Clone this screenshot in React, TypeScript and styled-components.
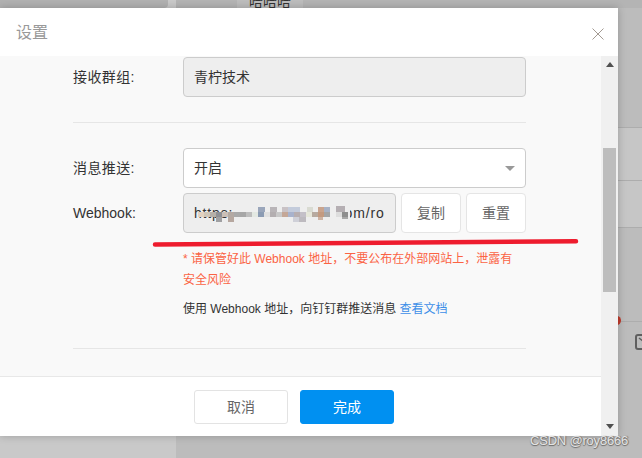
import React from "react";
import styled, { createGlobalStyle } from "styled-components";

const Global = createGlobalStyle`
  html, body { margin: 0; padding: 0; background: #bcbcbc; overflow: hidden; }
  * { box-sizing: border-box; }
  #root { font-family: "Liberation Sans", "Noto Sans CJK SC", sans-serif; }
`;

const Page = styled.div`
  position: relative;
  width: 642px;
  height: 458px;
  overflow: hidden;
  display: flex;
`;

const Sidebar = styled.div`
  width: 176px;
  background: #c9c9c9;
`;

const SidebarTop = styled.div`
  width: 168px;
  height: 8px;
  background: #b1b1b1;
  border-bottom-right-radius: 4px;
`;

const Main = styled.div`
  flex: 1;
  position: relative;
  display: flex;
  flex-direction: column;
`;

const TopBar = styled.div`
  height: 8px;
  background: #b4b4b4;
  padding-left: 61px;
`;

const TopTab = styled.div`
  width: 66px;
  height: 8px;
  overflow: hidden;
  background: #bdbdbd;
  display: flex;
  justify-content: center;
  align-items: flex-end;
  font-size: 14px;
  line-height: 14px;
  color: #333;
`;

const TopTabText = styled.span`
  display: block;
  margin-bottom: -1px;
`;

const Row = styled.div<{ $h: number; $light?: boolean }>`
  height: ${(p) => p.$h}px;
  border-bottom: 1px solid #adadad;
  background: ${(p) => (p.$light ? "#c6c6c6" : "#bcbcbc")};
`;

const Dot = styled.div`
  position: absolute;
  left: 437px;
  top: 316px;
  width: 8px;
  height: 9px;
  border-radius: 50%;
  background: #c0392b;
`;

const BoxIcon = styled.svg`
  position: absolute;
  left: 459px;
  top: 334px;
`;

const Dialog = styled.div`
  position: absolute;
  left: 0;
  top: 8px;
  width: 618px;
  height: 428px;
  background: #fff;
  box-shadow: 0 0 8px rgba(0, 0, 0, 0.22);
  display: flex;
  flex-direction: column;
`;

const Header = styled.div`
  height: 48px;
  flex: none;
  display: flex;
  align-items: center;
  justify-content: space-between;
  padding: 0 14px 0 16px;
`;

const Title = styled.div`
  font-size: 16px;
  color: #999;
  margin-top: -2px;
`;

const CloseIcon = styled.svg`
  margin-top: 3px;
`;

const Columns = styled.div`
  flex: 1;
  display: flex;
  min-height: 0;
`;

const Left = styled.div`
  flex: 1;
  min-width: 0;
  display: flex;
  flex-direction: column;
`;

const Body = styled.div`
  height: 320px;
  background: #f9f9f9;
  padding: 1px 75px 0 73px;
  overflow: hidden;
`;

const FormRow = styled.div<{ $gap?: number }>`
  display: flex;
  align-items: center;
  margin-top: ${(p) => p.$gap ?? 0}px;
`;

const Label = styled.div<{ $cjk?: boolean }>`
  width: 110px;
  flex: none;
  font-size: 14px;
  color: #333;
  letter-spacing: ${(p) => (p.$cjk ? "0.4px" : "0")};
  padding-bottom: ${(p) => (p.$cjk ? "2px" : "0")};
`;

const Control = styled.div`
  flex: 1;
  min-width: 0;
  height: 40px;
  border: 1px solid #ccc;
  border-radius: 4px;
  padding: 0 10px;
  font-size: 14px;
  display: flex;
  align-items: center;
  color: #333;
`;

const Disabled = styled(Control)<{ $cjk?: boolean }>`
  background: #eee;
  position: relative;
  padding-bottom: ${(p) => (p.$cjk ? "3px" : "0")};
`;

const Select = styled(Control)`
  background: #fff;
  justify-content: space-between;
  padding-bottom: 2px;
`;

const Caret = styled.span`
  width: 0;
  height: 0;
  margin-top: 2px;
  border-left: 5px solid transparent;
  border-right: 5px solid transparent;
  border-top: 5px solid #999;
`;

const Divider = styled.div<{ $top: number; $bottom: number }>`
  height: 1px;
  background: #e6e6e6;
  margin: ${(p) => p.$top}px 0 ${(p) => p.$bottom}px;
`;

const UrlText = styled.span`
  white-space: nowrap;
  letter-spacing: 0.83px;
`;

const Mosaic = styled.svg`
  position: absolute;
  left: 1px;
  top: 1px;
`;

const Btn = styled.button`
  flex: none;
  width: 60px;
  height: 40px;
  margin-left: 5px;
  background: #fff;
  border: 1px solid #e5e5e5;
  border-radius: 4px;
  font: inherit;
  font-size: 14px;
  color: #666;
  padding: 0 0 2px;
`;

const Hint = styled.div<{ $gap: number; $warn?: boolean }>`
  margin: ${(p) => p.$gap}px 0 0 110px;
  font-size: 12px;
  line-height: 21px;
  color: ${(p) => (p.$warn ? "#fb6344" : "#333")};
  max-width: 335px;
`;

const DocLink = styled.a`
  color: #3d8fe8;
`;

const Footer = styled.div`
  flex: 1;
  background: #fff;
  border-top: 1px solid #e8e8e8;
  display: flex;
  align-items: center;
  gap: 12px;
  padding-left: 194px;
`;

const FootBtn = styled.button<{ $primary?: boolean }>`
  width: 94px;
  height: 34px;
  border-radius: 3px;
  border: 1px solid ${(p) => (p.$primary ? "#0090f1" : "#e3e3e3")};
  background: ${(p) => (p.$primary ? "#0090f1" : "#fff")};
  color: ${(p) => (p.$primary ? "#fff" : "#666")};
  font: inherit;
  font-size: 14px;
  padding: 0 0 2px;
`;

const Scrollbar = styled.div`
  width: 17px;
  flex: none;
  background: #f0f0f0;
  display: flex;
  flex-direction: column;
  align-items: center;
`;

const ArrowUp = styled.span`
  margin-top: 6px;
  width: 0;
  height: 0;
  border-left: 4px solid transparent;
  border-right: 4px solid transparent;
  border-bottom: 5px solid #505050;
`;

const ArrowDown = styled.span`
  margin-top: auto;
  margin-bottom: 7px;
  width: 0;
  height: 0;
  border-left: 4px solid transparent;
  border-right: 4px solid transparent;
  border-top: 5px solid #505050;
`;

const Thumb = styled.div`
  width: 13px;
  height: 144px;
  margin-top: 81px;
  background: #bdbdbd;
`;

const Stroke = styled.svg`
  position: absolute;
  left: 0;
  top: 0;
  pointer-events: none;
`;

const Watermark = styled.div`
  position: absolute;
  left: 530px;
  top: 433px;
  font-size: 13px;
  line-height: 16px;
  letter-spacing: -0.2px;
  color: #e4e4e4;
  text-shadow: 1px 0 1px #6a6a6a, 0 1px 1px #6a6a6a;
  white-space: nowrap;
`;

const cells: [number, number, number, number, string][] = (
  [
    [38, "#e3d2c0"], [56, "#cfc6b8"], [74, "#b5afa8"], [92, "#8e9095"], [110, "#cbbfb6"],
    [128, "#b3a9a3"], [146, "#a9a9a9"], [164, "#a6a6a6"], [182, "#bdbdbd"], [200, "#e3e8e2"],
    [218, "#8b9bb3"], [236, "#e0e0e0"], [254, "#b3aeb0"], [272, "#c8c8c8"], [290, "#c4a797"],
    [308, "#a8b2cc"], [326, "#b7aeb0"], [344, "#c4c0c8"], [362, "#e6e7da"], [380, "#b7aa9f"],
    [398, "#c39a80"], [416, "#a3a5a7"], [452, "#dddddd"], [470, "#8e8e8e"],
  ] as [number, string][]
)
  .map(([x, c]) => [x, 50, 18, 16, c] as [number, number, number, number, string])
  .concat([
    [218, 36, 22, 14, "#9aa6bb"],
    [255, 36, 20, 14, "#b9b5b8"],
    [290, 36, 20, 14, "#c9c2c5"],
    [310, 36, 35, 14, "#c3cbdb"],
    [365, 36, 20, 14, "#d9dbd2"],
    [400, 36, 18, 14, "#c9a48e"],
    [418, 36, 17, 14, "#a7b2c6"],
    [452, 32, 28, 18, "#b5afb3"],
    [92, 66, 18, 16, "#a0a0a2"],
    [130, 66, 18, 16, "#b6a79f"],
    [325, 66, 18, 16, "#cfd0d8"],
    [343, 66, 19, 16, "#bdbabf"],
    [398, 66, 17, 10, "#cdb3a3"],
    [470, 66, 20, 6, "#a8a8a8"],
  ]);

export default function App() {
  return (
    <Page>
      <Global />
      <Sidebar>
        <SidebarTop />
      </Sidebar>
      <Main>
        <TopBar>
          <TopTab>
            <TopTabText>哈哈哈</TopTabText>
          </TopTab>
        </TopBar>
        <Row $h={120} />
        <Row $h={53} $light />
        <Row $h={47} $light />
        <Row $h={94} />
        <Dot />
        <BoxIcon width="16" height="16" viewBox="0 0 16 16">
          <rect x="1" y="1" width="14" height="14" rx="2" fill="none" stroke="#5f5f5f" strokeWidth="2" />
          <path d="M4 4l5 4" stroke="#5f5f5f" strokeWidth="1.5" fill="none" />
        </BoxIcon>
      </Main>
      <Dialog>
        <Header>
          <Title>设置</Title>
          <CloseIcon width="12" height="12" viewBox="0 0 12 12">
            <path d="M0.5 0.5L11.5 11.5M11.5 0.5L0.5 11.5" stroke="#a39a92" strokeWidth="1" fill="none" />
          </CloseIcon>
        </Header>
        <Columns>
          <Left>
            <Body>
              <FormRow>
                <Label $cjk>接收群组:</Label>
                <Disabled $cjk>青柠技术</Disabled>
              </FormRow>
              <Divider $top={25} $bottom={25} />
              <FormRow>
                <Label $cjk>消息推送:</Label>
                <Select>
                  开启
                  <Caret />
                </Select>
              </FormRow>
              <FormRow $gap={5}>
                <Label>Webhook:</Label>
                <Disabled>
                  <UrlText>https://oapi.dingtalk.com/ro</UrlText>
                  <Mosaic width="200" height="36" viewBox="0 0 600 108" shapeRendering="crispEdges">
                    <rect x="140" y="20" width="355" height="70" fill="#eeeeee" />
                    {cells.map(([x, y, w, h, c], i) => (
                      <rect key={i} x={x} y={y} width={w} height={h} fill={c} />
                    ))}
                  </Mosaic>
                </Disabled>
                <Btn>复制</Btn>
                <Btn>重置</Btn>
              </FormRow>
              <Hint $warn $gap={16}>
                * 请保管好此 Webhook 地址，不要公布在外部网站上，泄露有安全风险
              </Hint>
              <Hint $gap={8}>
                使用 Webhook 地址，向钉钉群推送消息 <DocLink>查看文档</DocLink>
              </Hint>
              <Divider $top={28} $bottom={0} />
            </Body>
            <Footer>
              <FootBtn>取消</FootBtn>
              <FootBtn $primary>完成</FootBtn>
            </Footer>
          </Left>
          <Scrollbar>
            <ArrowUp />
            <Thumb />
            <ArrowDown />
          </Scrollbar>
        </Columns>
      </Dialog>
      <Stroke width="642" height="458" viewBox="0 0 642 458">
        <path d="M155 244.5Q360 243.5 576 241.2" stroke="#ee1c2e" strokeWidth="4.5" strokeLinecap="round" fill="none" />
      </Stroke>
      <Watermark>CSDN @roy8666</Watermark>
    </Page>
  );
}
